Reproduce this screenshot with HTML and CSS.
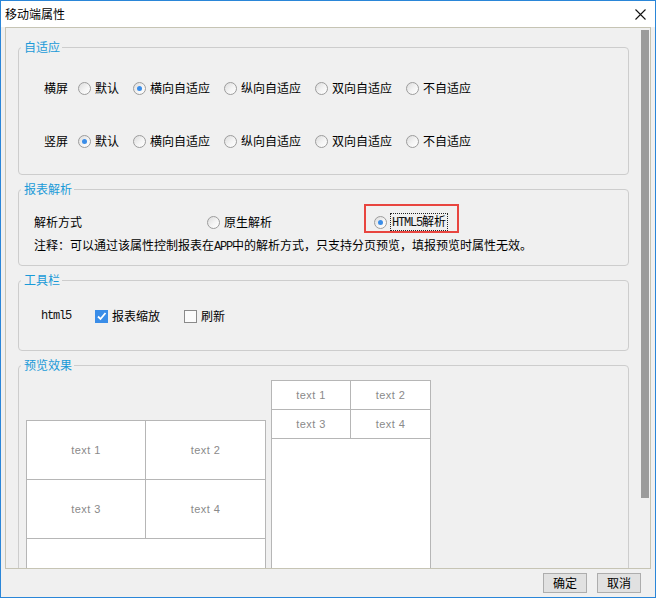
FILE: index.html
```html
<!DOCTYPE html>
<html lang="zh-CN">
<head>
<meta charset="utf-8">
<title>移动端属性</title>
<link rel="stylesheet" href="styles.css">
</head>
<body>
<div class="window">
  <div class="titlebar">
    <span class="title">移动端属性</span>
    <svg class="close" width="11" height="11" viewBox="0 0 11 11"><path d="M0.5 0.5 L10.5 10.5 M10.5 0.5 L0.5 10.5" stroke="#111" stroke-width="1.1" fill="none"/></svg>
  </div>
  <div class="pane">
    <div class="content">
      <div class="group g-adapt">
        <span class="legend">自适应</span>
        <div class="row">
          <span class="lbl">横屏</span>
          <div class="opts">
            <span class="opt"><span class="radio"></span>默认</span>
            <span class="opt"><span class="radio on"></span>横向自适应</span>
            <span class="opt"><span class="radio"></span>纵向自适应</span>
            <span class="opt"><span class="radio"></span>双向自适应</span>
            <span class="opt"><span class="radio"></span>不自适应</span>
          </div>
        </div>
        <div class="row">
          <span class="lbl">竖屏</span>
          <div class="opts">
            <span class="opt"><span class="radio on"></span>默认</span>
            <span class="opt"><span class="radio"></span>横向自适应</span>
            <span class="opt"><span class="radio"></span>纵向自适应</span>
            <span class="opt"><span class="radio"></span>双向自适应</span>
            <span class="opt"><span class="radio"></span>不自适应</span>
          </div>
        </div>
      </div>

      <div class="group g-parse">
        <span class="legend">报表解析</span>
        <div class="parse-row">
          <span>解析方式</span>
          <span class="opt"><span class="radio"></span>原生解析</span>
          <span class="opt opt-h5"><span class="radio on"></span><span class="focus"><span class="mono">HTML5</span>解析</span><span class="highlight"></span></span>
        </div>
        <div class="note">注释：可以通过该属性控制报表在<span class="mono">APP</span>中的解析方式，只支持分页预览，填报预览时属性无效。</div>
      </div>

      <div class="group g-tool">
        <span class="legend">工具栏</span>
        <div class="tool-row">
          <span class="mono">html5</span>
          <span class="opt"><span class="check on"><svg width="11" height="11" viewBox="0 0 11 11"><path d="M2 5.5 L4.5 8 L9.5 2" stroke="#fff" stroke-width="1.8" fill="none"/></svg></span>报表缩放</span>
          <span class="opt"><span class="check"></span>刷新</span>
        </div>
      </div>

      <div class="group g-preview">
        <span class="legend">预览效果</span>
        <div class="preview">
          <div class="table big">
            <div class="cells">
              <div class="cell">text 1</div>
              <div class="cell">text 2</div>
              <div class="cell">text 3</div>
              <div class="cell">text 4</div>
            </div>
          </div>
          <div class="table small">
            <div class="cells">
              <div class="cell">text 1</div>
              <div class="cell">text 2</div>
              <div class="cell">text 3</div>
              <div class="cell">text 4</div>
            </div>
          </div>
        </div>
      </div>
    </div>
    <div class="scrollbar"><div class="thumb"></div></div>
  </div>
  <div class="footer">
    <button class="btn">确定</button>
    <button class="btn">取消</button>
  </div>
</div>
</body>
</html>
```

FILE: styles.css
```css
* { box-sizing: border-box; }
html, body { margin: 0; padding: 0; }
body {
  width: 656px;
  height: 598px;
  font-family: "Noto Sans CJK SC", "Liberation Sans", sans-serif;
  font-size: 12px;
  line-height: 16px;
  color: #000;
  overflow: hidden;
}
.window {
  width: 656px;
  height: 598px;
  border: 1px solid #2a86d8;
  background: #f0f0f0;
  display: flex;
  flex-direction: column;
}
.titlebar {
  height: 26px;
  background: #fff;
  display: flex;
  align-items: center;
  justify-content: space-between;
  padding: 0 9px 0 4px;
  flex: none;
}
.title { font-size: 12px; }
.close { display: block; }

.pane {
  height: 542px;
  margin: 0 4px;
  border: 1px solid #c6c4b4;
  background: #f0f0f0;
  display: flex;
  overflow: hidden;
  flex: none;
}
.content {
  flex: 1;
  padding: 19px 11px 0 12px;
  overflow: hidden;
}
.scrollbar {
  width: 10px;
  flex: none;
  padding: 2px 1px 0 1px;
}
.thumb {
  width: 8px;
  height: 468px;
  background: #9b9b9b;
}

.group {
  position: relative;
  border: 1px solid #cdcdcd;
  border-radius: 4px;
}
.legend {
  position: absolute;
  top: -9px;
  left: 2px;
  padding: 0 2px 0 3px;
  background: #f0f0f0;
  color: #1a9ad8;
  line-height: 16px;
}

.g-adapt {
  height: 128px;
  padding: 32px 0 0 25px;
  display: flex;
  flex-direction: column;
  gap: 37px;
}
.row { display: flex; align-items: center; height: 16px; }
.lbl { width: 24px; margin-right: 10px; }
.opts { display: flex; gap: 14px; }
.opt { display: inline-flex; align-items: center; white-space: nowrap; }

.radio {
  position: relative;
  width: 13px;
  height: 13px;
  flex: none;
  border-radius: 50%;
  border: 1px solid #9c9c9c;
  background: linear-gradient(135deg, #dcdcdc 0%, #f4f4f4 55%, #ffffff 100%);
  margin-right: 4px;
}
.radio.on::after {
  content: "";
  position: absolute;
  left: 3px;
  top: 3px;
  width: 5px;
  height: 5px;
  border-radius: 50%;
  background: #3a8de8;
}

.g-parse {
  height: 77px;
  margin-top: 14px;
  padding: 23px 0 0 15px;
}
.parse-row {
  display: grid;
  grid-template-columns: 173px 167px auto;
  align-items: center;
  height: 16px;
}
.opt-h5 { position: relative; }
.opt-h5 .radio { margin-right: 3px; }
.focus {
  border: 1px dotted #222;
  line-height: 14px;
  padding: 0 1px;
}
.highlight {
  position: absolute;
  left: -10px;
  top: -9px;
  width: 95px;
  height: 29px;
  border: 2px solid #e8453f;
}
.note { margin-top: 8px; white-space: nowrap; }

.mono {
  font-family: "Liberation Mono", monospace;
  font-size: 12px;
  letter-spacing: -1.2px;
  font-weight: normal;
  color: #111;
}

.g-tool {
  height: 71px;
  margin-top: 14px;
  padding: 27px 0 0 22px;
}
.tool-row { display: flex; align-items: center; gap: 24px; height: 16px; }
.check {
  width: 13px;
  height: 13px;
  flex: none;
  border: 1px solid #8a8a8a;
  background: #fbfbfb;
  margin-right: 4px;
  display: flex;
  align-items: center;
  justify-content: center;
}
.check.on { background: #3a8de8; border-color: #3a8de8; }
.check svg { display: block; }

.g-preview {
  height: 300px;
  margin-top: 14px;
  padding-left: 7px;
}
.preview { display: flex; align-items: flex-start; gap: 5px; }
.table {
  background: #fff;
  border: 1px solid #b6b6b6;
  height: 260px;
}
.big { width: 240px; margin-top: 54px; }
.small { width: 160px; margin-top: 14px; }
.cells { display: grid; grid-template-columns: 1fr 1fr; }
.cell {
  display: flex;
  align-items: center;
  justify-content: center;
  font-family: "Liberation Sans", sans-serif;
  font-size: 11px;
  letter-spacing: 0.4px;
  color: #8a8a8a;
  border-bottom: 1px solid #b6b6b6;
}
.cell:nth-child(odd) { border-right: 1px solid #b6b6b6; }
.big .cell { height: 59px; }
.big .cells { grid-template-columns: 119px 119px; }
.small .cell { height: 29px; }
.small .cells { grid-template-columns: 79px 79px; }

.footer {
  flex: 1;
  display: flex;
  justify-content: flex-end;
  align-items: flex-start;
  gap: 10px;
  padding: 4px 14px 0 0;
}
.btn {
  width: 44px;
  height: 20px;
  margin: 0;
  padding: 0;
  border: 1px solid #adadad;
  background: #e1e1e1;
  font-family: "Noto Sans CJK SC", sans-serif;
  font-size: 12px;
  line-height: 16px;
  color: #000;
}
```
